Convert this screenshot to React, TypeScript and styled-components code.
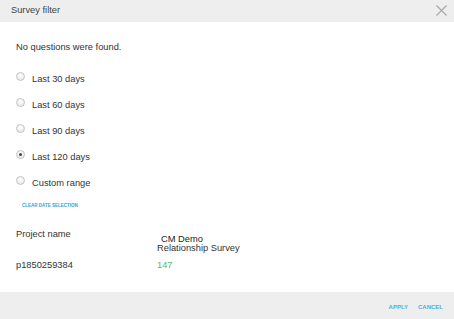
import React from 'react';
import styled, { createGlobalStyle } from 'styled-components';

const GlobalStyle = createGlobalStyle`
  html, body {
    margin: 0;
    padding: 0;
    background: #ffffff;
  }
  body {
    font-family: 'Liberation Sans', Arial, sans-serif;
    color: #333333;
  }
`;

const ranges = ['Last 30 days', 'Last 60 days', 'Last 90 days', 'Last 120 days', 'Custom range'];

const App: React.FC = () => {
  return (
    <>
      <GlobalStyle />
      <Dialog>
        <Header>
          <Title>Survey filter</Title>
          <CloseIcon width="11" height="11" viewBox="0 0 11 11">
            <path d="M0.5 0.5L10.5 10.5M10.5 0.5L0.5 10.5" stroke="#a8a8a8" strokeWidth="1.2" />
          </CloseIcon>
        </Header>
        <Body>
          <Message>No questions were found.</Message>
          <RadioList>
            {ranges.map(label => (
              <RadioRow key={label}>
                <Radio checked={label === 'Last 120 days'} />
                <RadioLabel>{label}</RadioLabel>
              </RadioRow>
            ))}
          </RadioList>
          <ClearLink>CLEAR DATE SELECTION</ClearLink>
          <Table>
            <Label>Project name</Label>
            <SurveyName>
              <SurveyTop>CM Demo</SurveyTop>
              <span>Relationship Survey</span>
            </SurveyName>
            <ProjectId>p1850259384</ProjectId>
            <Count>147</Count>
          </Table>
        </Body>
        <Footer>
          <FooterButton>APPLY</FooterButton>
          <FooterButton>CANCEL</FooterButton>
        </Footer>
      </Dialog>
    </>
  );
};

const Dialog = styled.div`
  width: 454px;
  height: 319px;
  display: flex;
  flex-direction: column;
  background: #ffffff;
`;

const Header = styled.div`
  height: 22px;
  background: #eeeeee;
  display: flex;
  align-items: center;
  justify-content: space-between;
  padding: 0 7px 0 11px;
  box-sizing: border-box;
`;

const Title = styled.div`
  font-size: 9.3px;
  color: #444444;
  margin-top: -2px;
`;

const CloseIcon = styled.svg`
  display: block;
  margin-top: -1px;
`;

const Body = styled.div`
  flex: 1;
  padding: 19px 16px 0 16px;
  box-sizing: border-box;
`;

const Message = styled.div`
  font-size: 9.3px;
  color: #333333;
  line-height: 13px;
`;

const RadioList = styled.div`
  display: flex;
  flex-direction: column;
  gap: 13px;
  margin-top: 18px;
`;

const RadioRow = styled.div`
  display: flex;
  align-items: center;
  height: 13px;
`;

const Radio = styled.span<{ checked?: boolean }>`
  width: 9px;
  height: 9px;
  border-radius: 50%;
  box-sizing: border-box;
  border: 1px solid #c4c4c4;
  background: radial-gradient(circle at 50% 35%, #ffffff 0%, #e3e3e3 100%);
  margin-top: -4px;
  position: relative;
  &::after {
    content: '';
    display: ${p => (p.checked ? 'block' : 'none')};
    position: absolute;
    left: 2px;
    top: 2px;
    width: 3px;
    height: 3px;
    border-radius: 50%;
    background: #444444;
  }
`;

const RadioLabel = styled.span`
  font-size: 9.3px;
  color: #333333;
  margin-left: 7px;
`;

const ClearLink = styled.div`
  font-size: 4.5px;
  line-height: 6px;
  font-weight: bold;
  color: #29a3e3;
  margin: 14px 0 0 6px;
`;

const Table = styled.div`
  display: grid;
  grid-template-columns: 141px auto;
  row-gap: 7px;
  margin-top: 19px;
  font-size: 9.3px;
  color: #333333;
`;

const Label = styled.div`
  line-height: 13px;
`;

const SurveyName = styled.div`
  display: flex;
  flex-direction: column;
  line-height: 8.5px;
  padding-top: 7px;
`;

const SurveyTop = styled.span`
  margin-left: 4px;
  color: #222222;
`;

const ProjectId = styled.div`
  line-height: 13px;
`;

const Count = styled.div`
  line-height: 13px;
  color: #5cb85c;
`;

const Footer = styled.div`
  height: 27px;
  background: #eeeeee;
  display: flex;
  justify-content: flex-end;
  align-items: center;
  gap: 10px;
  padding: 2px 11px 0 0;
  box-sizing: border-box;
`;

const FooterButton = styled.span`
  font-size: 6px;
  font-weight: bold;
  color: #4aaee8;
`;

export default App;
